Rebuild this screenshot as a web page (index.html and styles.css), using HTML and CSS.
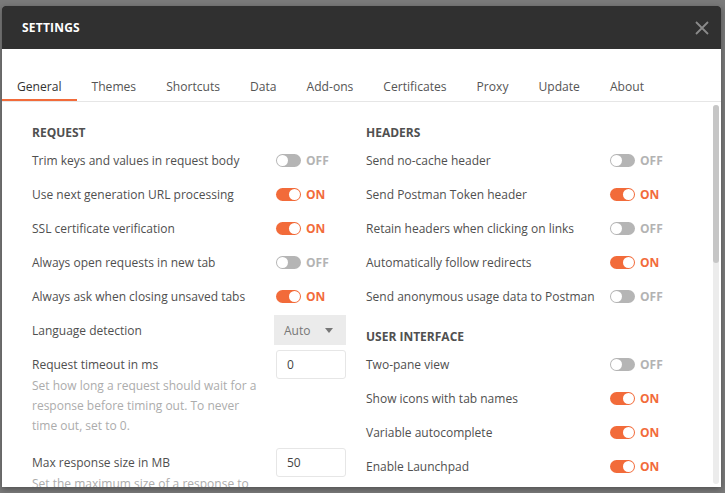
FILE: index.html
```html
<!DOCTYPE html>
<html>
<head>
<meta charset="utf-8">
<link rel="stylesheet" href="styles.css">
</head>
<body>
<div class="modal">
  <div class="modal-head">
    <span class="title">SETTINGS</span>
    <svg class="close" width="14" height="14" viewBox="0 0 14 14"><path d="M1 1 L13 13 M13 1 L1 13" stroke="#8a8a8a" stroke-width="1.8" fill="none"/></svg>
  </div>
  <div class="tabs">
    <span class="tab active">General</span>
    <span class="tab">Themes</span>
    <span class="tab">Shortcuts</span>
    <span class="tab">Data</span>
    <span class="tab">Add-ons</span>
    <span class="tab">Certificates</span>
    <span class="tab">Proxy</span>
    <span class="tab">Update</span>
    <span class="tab">About</span>
  </div>
  <div class="body">
    <div class="cols">
      <div class="col">
        <div class="heading">REQUEST</div>
        <div class="row"><span class="label">Trim keys and values in request body</span><span class="ctl"><i class="sw off"></i><b class="st off">OFF</b></span></div>
        <div class="row"><span class="label">Use next generation URL processing</span><span class="ctl"><i class="sw on"></i><b class="st on">ON</b></span></div>
        <div class="row"><span class="label">SSL certificate verification</span><span class="ctl"><i class="sw on"></i><b class="st on">ON</b></span></div>
        <div class="row"><span class="label">Always open requests in new tab</span><span class="ctl"><i class="sw off"></i><b class="st off">OFF</b></span></div>
        <div class="row"><span class="label">Always ask when closing unsaved tabs</span><span class="ctl"><i class="sw on"></i><b class="st on">ON</b></span></div>
        <div class="row"><span class="label">Language detection</span><span class="ctl"><span class="select">Auto<span class="caret"></span></span></span></div>
        <div class="row"><span class="label">Request timeout in ms</span><span class="ctl"><span class="input">0</span></span></div>
        <div class="help">Set how long a request should wait for a response before timing out. To never time out, set to 0.</div>
        <div class="row gap"><span class="label">Max response size in MB</span><span class="ctl"><span class="input">50</span></span></div>
        <div class="help">Set the maximum size of a response to download.</div>
      </div>
      <div class="col">
        <div class="heading">HEADERS</div>
        <div class="row"><span class="label">Send no-cache header</span><span class="ctl"><i class="sw off"></i><b class="st off">OFF</b></span></div>
        <div class="row"><span class="label">Send Postman Token header</span><span class="ctl"><i class="sw on"></i><b class="st on">ON</b></span></div>
        <div class="row"><span class="label">Retain headers when clicking on links</span><span class="ctl"><i class="sw off"></i><b class="st off">OFF</b></span></div>
        <div class="row"><span class="label">Automatically follow redirects</span><span class="ctl"><i class="sw on"></i><b class="st on">ON</b></span></div>
        <div class="row"><span class="label">Send anonymous usage data to Postman</span><span class="ctl"><i class="sw off"></i><b class="st off">OFF</b></span></div>
        <div class="heading second">USER INTERFACE</div>
        <div class="row"><span class="label">Two-pane view</span><span class="ctl"><i class="sw off"></i><b class="st off">OFF</b></span></div>
        <div class="row"><span class="label">Show icons with tab names</span><span class="ctl"><i class="sw on"></i><b class="st on">ON</b></span></div>
        <div class="row"><span class="label">Variable autocomplete</span><span class="ctl"><i class="sw on"></i><b class="st on">ON</b></span></div>
        <div class="row"><span class="label">Enable Launchpad</span><span class="ctl"><i class="sw on"></i><b class="st on">ON</b></span></div>
      </div>
    </div>
    <div class="scroll"><div class="thumb"></div></div>
  </div>
</div>
</body>
</html>
```
FILE: styles.css
```css
html, body {
  margin: 0;
  padding: 0;
  height: 100%;
  overflow: hidden;
}
body {
  background: #7a7a7a;
  font-family: "Open Sans", "Liberation Sans", sans-serif;
  color: #505050;
  padding: 6px 0 0 2px;
  box-sizing: border-box;
}
.modal {
  width: 719px;
  height: 481px;
  background: #fff;
  border-radius: 3px 3px 0 0;
  overflow: hidden;
  display: flex;
  flex-direction: column;
  box-shadow: 0 2px 6px rgba(0,0,0,0.35);
}
.modal-head {
  height: 43px;
  flex: none;
  background: #303030;
  display: flex;
  align-items: center;
  justify-content: space-between;
  padding: 0 12px 0 20px;
}
.title {
  color: #fff;
  font-weight: 700;
  font-size: 12px;
  letter-spacing: 0.2px;
}
.close {
  display: block;
}
.tabs {
  flex: none;
  display: flex;
  padding-top: 28px;
  border-bottom: 1px solid #e6e6e6;
}
.tab {
  font-size: 12.1px;
  line-height: 20px;
  padding: 0 15px 2px;
  border-bottom: 2px solid transparent;
  color: #555;
}
.tab.active {
  border-bottom-color: #f26b3a;
  color: #333;
}
.body {
  flex: 1;
  display: flex;
  min-height: 0;
  overflow: hidden;
}
.cols {
  flex: 1;
  display: grid;
  grid-template-columns: 334px 1fr;
  padding-left: 30px;
  padding-top: 21px;
}
.heading {
  font-size: 12px;
  font-weight: 700;
  line-height: 20px;
  color: #505050;
}
.heading.second {
  margin-top: 14px;
}
.row {
  height: 34px;
  display: flex;
  align-items: center;
}
.row.gap {
  margin-top: 9px;
}
.label {
  width: 244px;
  flex: none;
  font-size: 12px;
  color: #4f4f4f;
  white-space: nowrap;
}
.ctl {
  display: flex;
  align-items: center;
}
.sw {
  display: block;
  width: 25px;
  height: 13px;
  border-radius: 7px;
  position: relative;
  background: #b5b5b5;
}
.sw::after {
  content: "";
  position: absolute;
  top: 1px;
  left: 1px;
  width: 11px;
  height: 11px;
  border-radius: 50%;
  background: #fff;
}
.sw.on {
  background: #f26b3a;
}
.sw.on::after {
  left: 13px;
}
.st {
  margin-left: 5px;
  font-size: 12px;
  font-weight: 700;
}
.st.off { color: #b3b3b3; }
.st.on { color: #f26b3a; }
.select {
  margin-left: -2px;
  width: 72px;
  height: 30px;
  box-sizing: border-box;
  background: #ebebeb;
  display: flex;
  align-items: center;
  justify-content: space-between;
  padding: 0 13px 0 10px;
  font-size: 12px;
  color: #777;
}
.caret {
  width: 0;
  height: 0;
  border-left: 4px solid transparent;
  border-right: 4px solid transparent;
  border-top: 5px solid #777;
}
.input {
  width: 70px;
  height: 29px;
  box-sizing: border-box;
  border: 1px solid #e6e6e6;
  border-radius: 3px;
  padding-left: 10px;
  display: flex;
  align-items: center;
  font-size: 12px;
  color: #444;
}
.help {
  width: 232px;
  margin-top: -5px;
  font-size: 12px;
  line-height: 20px;
  color: #acacac;
}
.scroll {
  flex: none;
  width: 6px;
  margin: 3px 2px 3px 0;
  background: #ececec;
  border-radius: 3px;
  display: flex;
  flex-direction: column;
}
.thumb {
  height: 158px;
  background: #c6c6c6;
  border-radius: 3px;
}
```
